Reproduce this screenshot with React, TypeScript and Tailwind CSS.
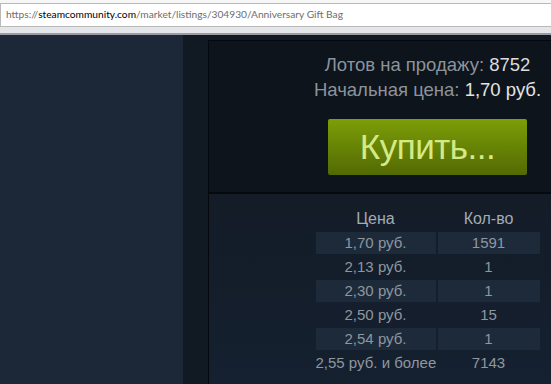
import React from "react";

const rows: [string, string][] = [
  ["1,70 руб.", "1591"],
  ["2,13 руб.", "1"],
  ["2,30 руб.", "1"],
  ["2,50 руб.", "15"],
  ["2,54 руб.", "1"],
];

export default function App() {
  return (
    <div className="w-[551px] h-[384px] overflow-hidden flex flex-col bg-[#1c2737]" style={{ fontFamily: '"Liberation Sans", Arial, sans-serif' }}>
      {/* address bar */}
      <div className="h-[35px] shrink-0 flex flex-col bg-[#f3f3f5]">
        <div className="h-[3px] bg-[#f7f7f7]" />
        <div className="h-[24px] bg-white border-t border-b border-l border-[#b9b9b9] flex items-center pl-[5px] text-[10.2px] text-[#6d6d6d] whitespace-nowrap" style={{ fontFamily: 'Lato, "Open Sans", sans-serif' }}>
          <span>https://</span>
          <span className="text-black">steamcommunity.com</span>
          <span>/market/listings/304930/Anniversary Gift Bag</span>
        </div>
        <div className="flex-1 bg-[#e4e6ea]" />
        <div className="h-[2px] bg-[#9a9ca2]" />
      </div>
      <div className="flex flex-1 min-h-0">
        <div className="w-[183px] shrink-0 bg-[#1c2737]" />
        <div className="flex-1 bg-[#111922] pl-[25px] pt-[5px] min-w-0">
          <div className="w-[438px] h-full border-l border-t border-[#05080c] bg-[#0e141c] flex flex-col">
            <div className="h-[151px] shrink-0 flex flex-col items-center pt-[11px]">
              <div className="text-[18.5px] leading-[25px] text-[#8c939b] whitespace-nowrap">
                Лотов на продажу: <span className="text-[#dcdcdc]">8752</span>
              </div>
              <div className="text-[18.5px] leading-[25px] text-[#8c939b] whitespace-nowrap">
                Начальная цена: <span className="text-[#e4e4e4]">1,70 руб.</span>
              </div>
              <div className="mt-[17px] w-[199px] h-[56px] rounded-[2px] bg-gradient-to-b from-[#7d9e07] to-[#536a04] flex items-center justify-center text-[35px] tracking-[-0.5px] text-[#d3ea86] leading-none pb-[2px]">
                Купить...
              </div>
            </div>
            <div className="h-[2px] bg-[#06090d]" />
            <div className="flex-1 bg-gradient-to-b from-[#131c27] to-[#152030] flex flex-col items-center pt-[13px]">
              <div className="grid grid-cols-[120px_102px] gap-x-[2px] gap-y-[2px] text-[15px] text-[#8e979f] text-center whitespace-nowrap">
                <div className="h-[23px] leading-[23px] text-[16px] text-[#a3abb3]">Цена</div>
                <div className="h-[23px] leading-[23px] text-[16px] text-[#a3abb3]">Кол-во</div>
                {rows.map(([p, q], i) => (
                  <React.Fragment key={i}>
                    <div className={`h-[22px] leading-[22px] ${i % 2 === 0 ? "bg-[#1d2a3a]" : ""}`}>{p}</div>
                    <div className={`h-[22px] leading-[22px] ${i % 2 === 0 ? "bg-[#1d2a3a]" : ""}`}>{q}</div>
                  </React.Fragment>
                ))}
                <div className="h-[22px] leading-[22px]">2,55 руб. и более</div>
                <div className="h-[22px] leading-[22px]">7143</div>
              </div>
            </div>
          </div>
        </div>
      </div>
    </div>
  );
}
